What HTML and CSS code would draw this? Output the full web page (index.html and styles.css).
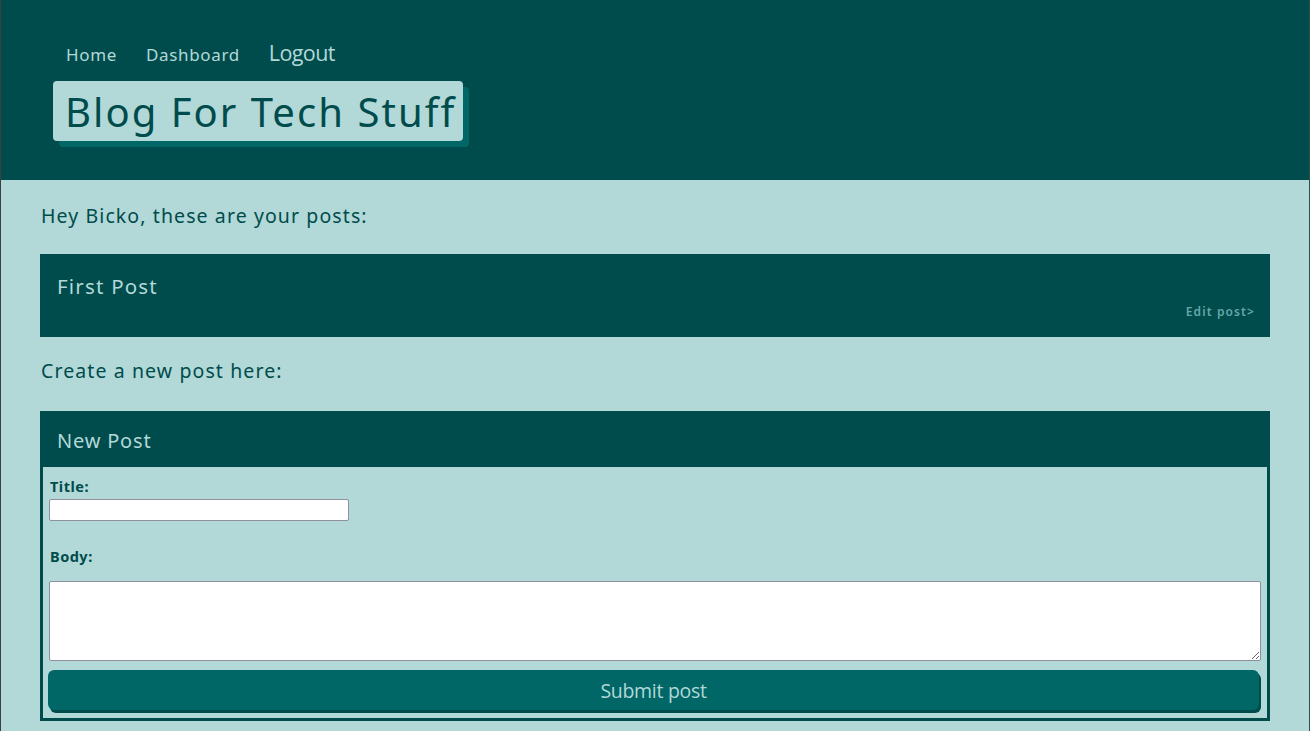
FILE: index.html
```html
<!DOCTYPE html>
<html lang="en">
<head>
<meta charset="utf-8">
<title>Blog For Tech Stuff</title>
<link rel="stylesheet" href="styles.css">
</head>
<body>
<div class="page">
  <header class="site-header">
    <nav class="nav">
      <a class="nav-link" href="#">Home</a>
      <a class="nav-link" href="#">Dashboard</a>
      <a class="nav-link nav-logout" href="#">Logout</a>
    </nav>
    <div class="brand"><h1 class="brand-title">Blog For Tech Stuff</h1></div>
  </header>
  <main class="content">
    <h2 class="section-title">Hey Bicko, these are your posts:</h2>
    <article class="post-card">
      <h3 class="post-title">First Post</h3>
      <a class="edit-link" href="#">Edit post&gt;</a>
    </article>
    <h2 class="section-title section-create">Create a new post here:</h2>
    <section class="new-post">
      <div class="new-post-head">New Post</div>
      <form class="new-post-form">
        <label class="field-label" for="title">Title:</label>
        <input class="title-input" id="title" type="text">
        <label class="field-label body-label" for="body">Body:</label>
        <textarea class="body-input" id="body"></textarea>
        <button class="submit-btn" type="button">Submit post</button>
      </form>
    </section>
  </main>
</div>
</body>
</html>
```
FILE: styles.css
```css
html, body {
  margin: 0;
  padding: 0;
  height: 100%;
}
body {
  background: #b2d8d8;
  font-family: "Noto Sans", "Open Sans", sans-serif;
  color: #004c4c;
  overflow: hidden;
}
.page {
  min-height: 100%;
  border-left: 1px solid #3f3f3f;
  border-right: 1px solid #2f4f4f;
  box-sizing: border-box;
}
.site-header {
  background: #004c4c;
  height: 180px;
  box-sizing: border-box;
  padding: 38px 0 0 52px;
}
.nav {
  display: flex;
  align-items: baseline;
  padding-left: 13px;
}
.nav-link {
  color: #b2d8d8;
  text-decoration: none;
  font-size: 17px;
  letter-spacing: 0.65px;
  margin-right: 29px;
}
.nav-logout {
  font-family: "Open Sans", sans-serif;
  font-size: 21.5px;
  letter-spacing: -0.6px;
  margin-right: 0;
}
.brand {
  display: inline-block;
  margin-top: 14px;
  background: #b2d8d8;
  border-radius: 4px;
  box-shadow: 6px 6px 0 #006666;
  padding: 0 7px 0 12px;
  height: 60px;
  box-sizing: border-box;
}
.brand-title {
  margin: 0;
  font-weight: 400;
  font-size: 40px;
  letter-spacing: 2.05px;
  line-height: 62px;
  color: #004c4c;
}
.content {
  padding: 22px 39px 0 39px;
}
.section-title {
  margin: 0;
  padding-left: 1px;
  font-size: 19.5px;
  font-weight: 400;
  letter-spacing: 1.1px;
  line-height: 28px;
  color: #004c4c;
}
.post-card {
  margin-top: 24px;
  background: #004c4c;
  height: 83px;
  box-sizing: border-box;
  padding: 19px 15px 0 17px;
  display: flex;
  flex-direction: column;
}
.post-title {
  margin: 0;
  font-size: 20.5px;
  font-weight: 400;
  letter-spacing: 1.2px;
  line-height: 26px;
  color: #b2d8d8;
}
.edit-link {
  align-self: flex-end;
  margin-top: 4px;
  font-size: 12px;
  font-weight: 600;
  letter-spacing: 1.1px;
  color: #66a6a6;
  text-decoration: none;
}
.section-create {
  margin-top: 20px;
}
.new-post {
  margin-top: 26px;
  border: 3px solid #004c4c;
  border-top: none;
  height: 310px;
  box-sizing: border-box;
}
.new-post-head {
  background: #004c4c;
  height: 56px;
  margin: 0 -3px;
  padding: 17px 0 0 17px;
  box-sizing: border-box;
  color: #b2d8d8;
  font-size: 20px;
  letter-spacing: 0.8px;
  line-height: 26px;
}
.new-post-form {
  display: flex;
  flex-direction: column;
  align-items: flex-start;
  padding: 8px 6px 0 5px;
}
.field-label {
  font-size: 14.5px;
  font-weight: 700;
  letter-spacing: 0.5px;
  line-height: 22px;
  padding-left: 2px;
  color: #004c4c;
}
.title-input {
  margin: 2px 0 0 1px;
  width: 300px;
  height: 22px;
  box-sizing: border-box;
  border: 1px solid #8f8f9d;
  border-radius: 2px;
  background: #fff;
}
.body-label {
  margin-top: 24px;
}
.body-input {
  margin: 14px 0 0 1px;
  width: calc(100% - 1px);
  height: 80px;
  box-sizing: border-box;
  border: 1px solid #8f8f9d;
  border-radius: 2px;
  background: #fff;
  resize: vertical;
}
.submit-btn {
  margin-top: 9px;
  width: calc(100% - 2px);
  height: 40px;
  background: #006666;
  color: #b2d8d8;
  border: none;
  border-radius: 6px;
  box-shadow: 2px 3px 0 #004c4c;
  font-family: "Open Sans", sans-serif;
  font-size: 19.5px;
  letter-spacing: -0.3px;
  cursor: pointer;
}
```
